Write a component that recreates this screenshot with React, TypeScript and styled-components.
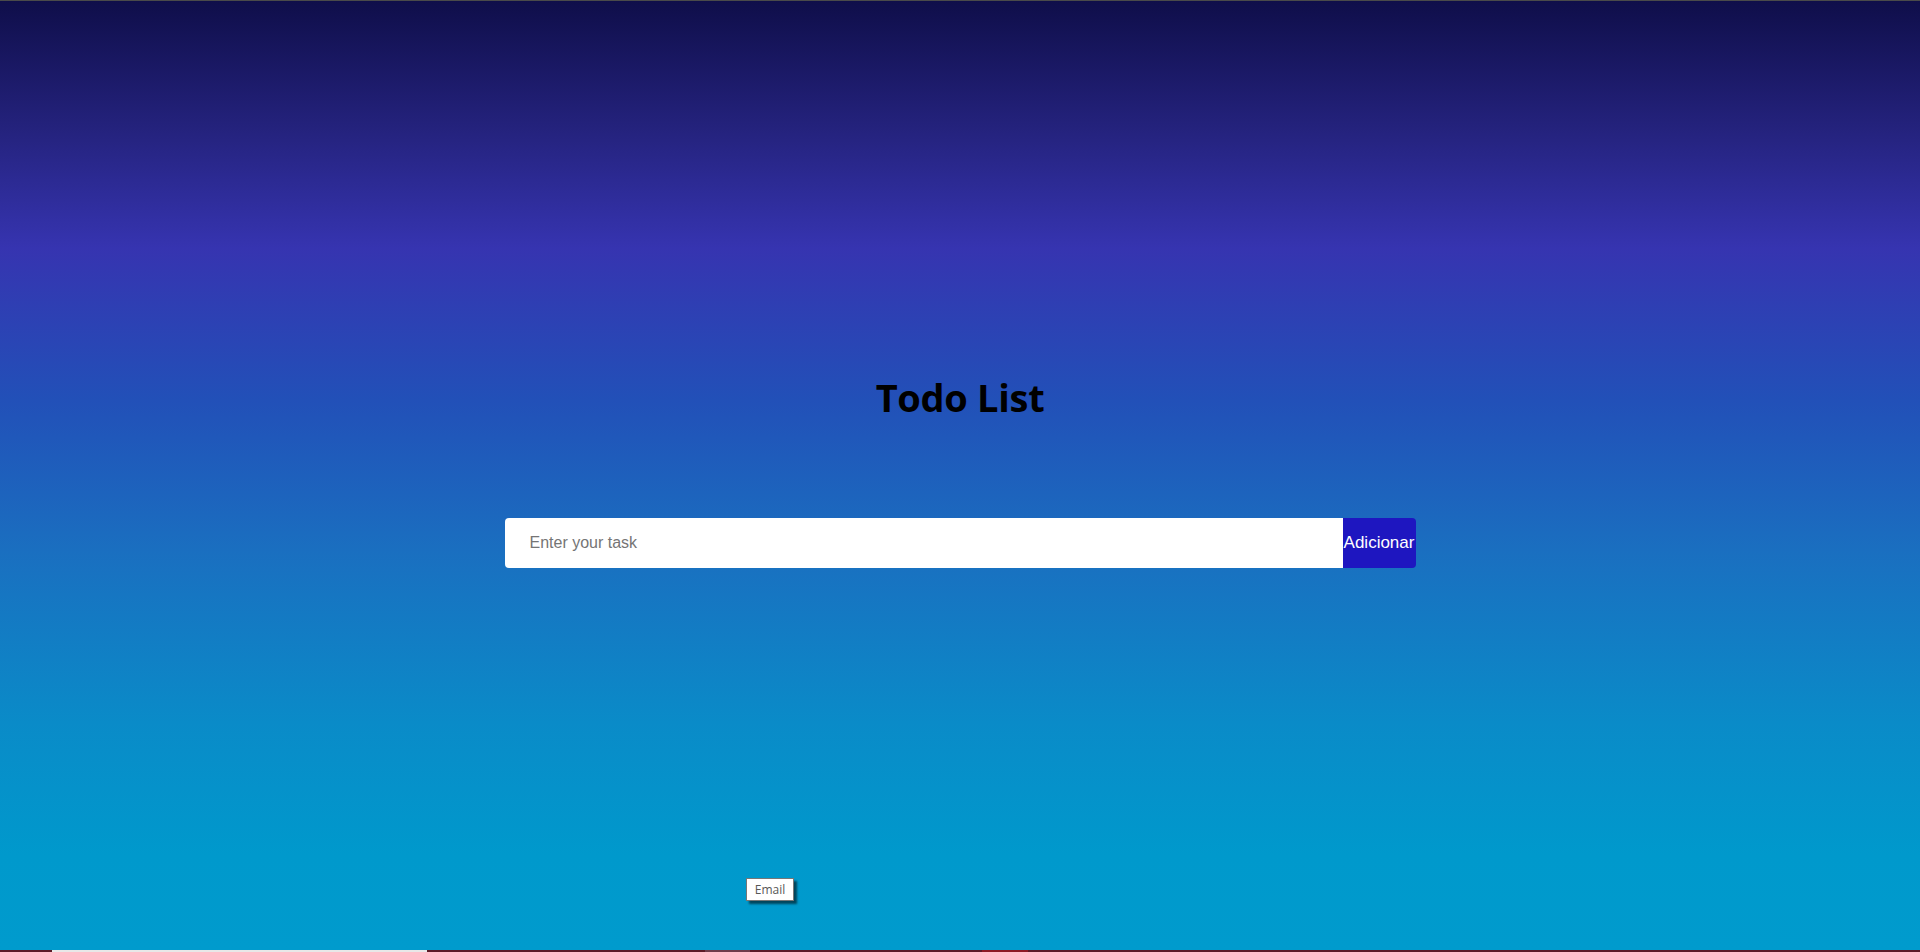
import styled, { createGlobalStyle } from "styled-components";
import { useState } from "react";

const GlobalStyle = createGlobalStyle`
  * {
    box-sizing: border-box;
  }
  html, body {
    margin: 0;
    padding: 0;
    height: 100%;
  }
  body {
    font-family: "Liberation Sans", Arial, sans-serif;
    overflow: hidden;
  }
`;

const Screen = styled.div`
  height: 100vh;
  display: flex;
  flex-direction: column;
  position: relative;
`;

const TopLine = styled.div`
  height: 1px;
  background: #4a4a4a;
`;

const Main = styled.main`
  flex: 1;
  display: flex;
  flex-direction: column;
  align-items: center;
  padding-top: 370px;
  background: linear-gradient(
    to bottom,
    #0f0e4a 0%,
    #25237f 14%,
    #3634b0 26%,
    #2250b8 42%,
    #1a6fc0 58%,
    #0a8bc8 76%,
    #0099cc 90%,
    #009bcd 100%
  );
`;

const Title = styled.h1`
  margin: 0;
  font-family: "Open Sans", "Noto Sans", sans-serif;
  font-size: 38px;
  font-weight: 700;
  letter-spacing: -0.3px;
  line-height: 52px;
  color: #000;
`;

const Form = styled.form`
  margin-top: 95px;
  display: flex;
  height: 50px;
`;

const TaskInput = styled.input`
  width: 838px;
  height: 50px;
  border: none;
  outline: none;
  border-radius: 4px 0 0 4px;
  padding: 0 25px;
  font-family: "Liberation Sans", Arial, sans-serif;
  font-size: 16px;
  color: #222;
  background: #fff;
  &::placeholder {
    color: #757575;
  }
`;

const AddButton = styled.button`
  width: 73px;
  height: 50px;
  border: none;
  padding: 0;
  border-radius: 0 4px 4px 0;
  background: #1e16c0;
  color: #fff;
  font-family: "Liberation Sans", Arial, sans-serif;
  font-size: 17px;
  cursor: pointer;
`;

const Tooltip = styled.div`
  position: absolute;
  left: 746px;
  top: 878px;
  width: 48px;
  height: 23px;
  border: 1px solid #767676;
  background: #fff;
  box-shadow: 3px 3px 2px rgba(0, 0, 0, 0.55);
  color: #575757;
  font-family: "Open Sans", "Noto Sans", sans-serif;
  font-size: 12px;
  display: flex;
  align-items: center;
  justify-content: center;
`;

const BottomStrip = styled.div`
  height: 2px;
  display: flex;
  background: #5b1a26;
`;

const Segment = styled.div<{ $w: number; $c: string }>`
  width: ${(p) => p.$w}px;
  background: ${(p) => p.$c};
`;

const segments = [
  { w: 52, c: "#5b1a26" },
  { w: 375, c: "#e8e8e8" },
  { w: 278, c: "#5b1a26" },
  { w: 45, c: "#6e3c4a" },
  { w: 232, c: "#5b1a26" },
  { w: 46, c: "#8c1a24" },
];

export default function App() {
  const [task, setTask] = useState("");
  const [todos, setTodos] = useState<string[]>([]);

  const onSubmit = (e: React.FormEvent<HTMLFormElement>) => {
    e.preventDefault();
    if (task.trim() === "") return;
    setTodos([...todos, task]);
    setTask("");
  };

  return (
    <>
      <GlobalStyle />
      <Screen>
        <TopLine />
        <Main>
          <Title>Todo List</Title>
          <Form onSubmit={onSubmit}>
            <TaskInput
              value={task}
              onChange={(e) => setTask(e.target.value)}
              placeholder="Enter your task"
              type="text"
            />
            <AddButton type="submit">Adicionar</AddButton>
          </Form>
        </Main>
        <BottomStrip>
          {segments.map((s, i) => (
            <Segment key={i} $w={s.w} $c={s.c} />
          ))}
        </BottomStrip>
        <Tooltip>Email</Tooltip>
      </Screen>
    </>
  );
}
